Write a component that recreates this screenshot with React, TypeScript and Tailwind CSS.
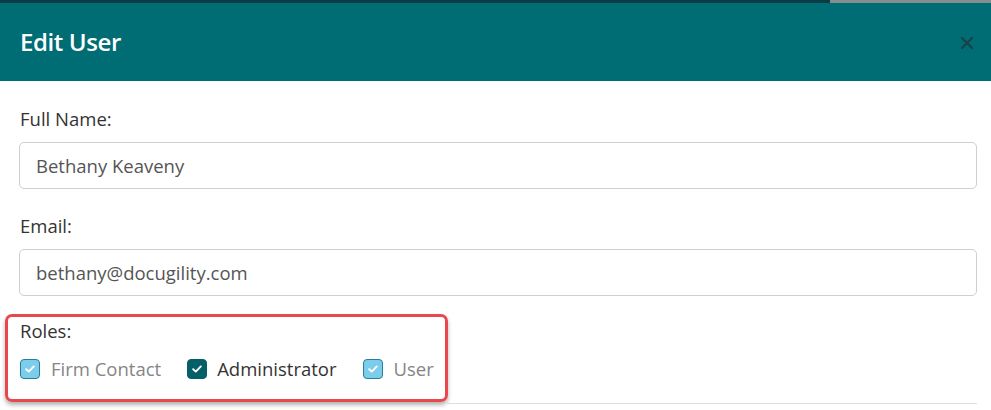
import React from "react";

function Check({ filled }: { filled: boolean }) {
  return (
    <span
      className={
        filled
          ? "flex h-[20px] w-[20px] items-center justify-center rounded-[4px] bg-[#045f68] border border-[#045f68]"
          : "flex h-[20px] w-[20px] items-center justify-center rounded-[4px] bg-[#7ccdec] border border-[#2a7f95]"
      }
    >
      <svg width="10" height="8" viewBox="0 0 10 8">
        <path d="M1.2 4.2 L3.8 6.6 L8.8 1.4" fill="none" stroke="white" strokeWidth="1.9" strokeLinecap="round" strokeLinejoin="round" />
      </svg>
    </span>
  );
}

export default function App() {
  return (
    <div className="w-[991px] h-[410px] overflow-hidden bg-white" style={{ fontFamily: '"Open Sans", "Noto Sans", sans-serif' }}>
      <div className="flex h-[3px]">
        <div className="w-[830px] bg-[#0b3d49]" />
        <div className="flex-1 bg-[#858e8f]" />
      </div>
      <div className="flex h-[78px] items-center justify-between bg-[#006d75] pl-[20px] pr-[18px]">
        <h1 className="text-[24px] font-semibold text-white tracking-[-0.4px]">Edit User</h1>
        <svg width="12" height="12" viewBox="0 0 12 12" className="mt-[2px]">
          <path d="M1 1 L11 11 M11 1 L1 11" stroke="#17424a" strokeWidth="2.2" strokeLinecap="round" />
        </svg>
      </div>
      <div className="px-[19px] pt-[26px] text-[#333]">
        <div className="text-[18.5px] leading-[24px] pl-[1px]">Full Name:</div>
        <div className="mt-[11px] flex h-[47px] w-[958px] items-center rounded-[5px] border border-[#cfcfcf] px-[16px] text-[18.5px] text-[#555]">
          Bethany Keaveny
        </div>
        <div className="mt-[25px] text-[18.5px] leading-[24px] pl-[1px]">Email:</div>
        <div className="mt-[11px] flex h-[47px] w-[958px] items-center rounded-[5px] border border-[#cfcfcf] px-[16px] text-[18.5px] text-[#555]">
          bethany@docugility.com
        </div>
      </div>
      <div className="relative mt-[18px] h-[95px]">
        <div className="absolute left-[5px] top-0 h-[88px] w-[443px] rounded-[7px] border-[3px] border-[#e8474b] shadow-[0_3px_4px_rgba(0,0,0,0.3)]" />
        <div className="absolute left-[447px] top-[89px] h-[1px] w-[530px] bg-[#dedede]" />
        <div className="relative pl-[20px] pt-[5px]">
          <div className="text-[18.5px] leading-[24px] text-[#333]">Roles:</div>
          <div className="mt-[14px] flex items-center text-[18.5px] leading-[24px]">
            <Check filled={false} />
            <span className="ml-[11px] text-[#858585]">Firm Contact</span>
            <span className="ml-[26px]"><Check filled={true} /></span>
            <span className="ml-[10px] text-[#333]">Administrator</span>
            <span className="ml-[26px]"><Check filled={false} /></span>
            <span className="ml-[11px] text-[#858585]">User</span>
          </div>
        </div>
      </div>
    </div>
  );
}
